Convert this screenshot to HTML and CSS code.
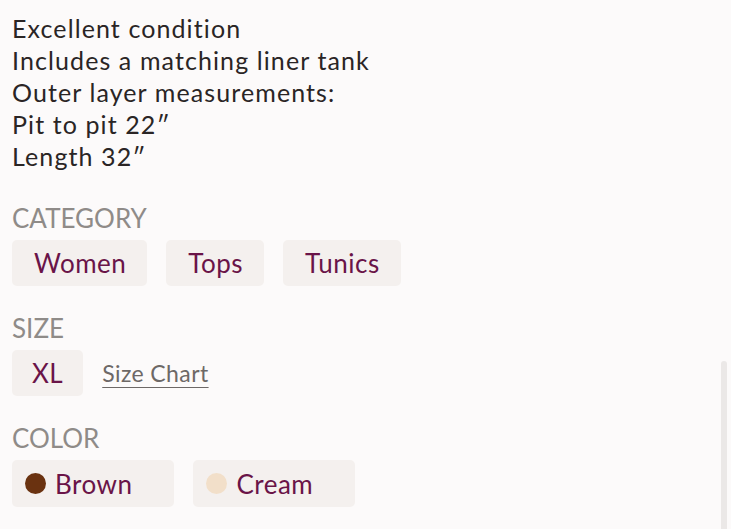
FILE: index.html
```html
<!DOCTYPE html>
<html>
<head>
<meta charset="utf-8">
<link rel="stylesheet" href="styles.css">
</head>
<body>
<div class="page">
  <div class="desc">
    <div>Excellent condition</div>
    <div>Includes a matching liner tank</div>
    <div>Outer layer measurements:</div>
    <div>Pit to pit 22″</div>
    <div>Length 32″</div>
  </div>

  <section class="group group-first">
    <div class="label">CATEGORY</div>
    <div class="chips">
      <span class="chip">Women</span>
      <span class="chip">Tops</span>
      <span class="chip">Tunics</span>
    </div>
  </section>

  <section class="group">
    <div class="label">SIZE</div>
    <div class="chips">
      <span class="chip chip-size">XL</span>
      <a class="size-chart">Size Chart</a>
    </div>
  </section>

  <section class="group">
    <div class="label">COLOR</div>
    <div class="chips">
      <span class="chip chip-color"><span class="dot dot-brown"></span>Brown</span>
      <span class="chip chip-color"><span class="dot dot-cream"></span>Cream</span>
    </div>
  </section>
</div>
<div class="scrollbar"></div>
</body>
</html>
```

FILE: styles.css
```css
html, body {
  margin: 0;
  padding: 0;
  background: #fcfafa;
  height: 100%;
  overflow: hidden;
}
body {
  font-family: "Lato", "Noto Sans", sans-serif;
  color: #2a2525;
}
.page {
  padding: 12px 12px 0 12px;
}
.desc {
  font-size: 25px;
  line-height: 32px;
  letter-spacing: 1.1px;
}
.group {
  margin-top: 29px;
}
.group-first {
  margin-top: 33px;
}
.label {
  font-size: 26px;
  line-height: 26px;
  color: #8f8b88;
  margin-bottom: 9px;
}
.chips {
  display: flex;
  align-items: center;
  gap: 19px;
}
.chip {
  display: inline-flex;
  align-items: center;
  height: 46px;
  padding: 0 21px 0 22px;
  background: #f4f0ee;
  border-radius: 5px;
  color: #6a1448;
  font-size: 26px;
  letter-spacing: 0.5px;
}
.chip-size {
  padding: 0 20px;
}
.size-chart {
  color: #6d6866;
  font-size: 23px;
  letter-spacing: 0.4px;
  text-decoration: underline;
  text-underline-offset: 5px;
  text-decoration-thickness: 1px;
}
.chip-color {
  height: 47px;
  padding: 0 42px 0 13px;
}
.dot {
  width: 21px;
  height: 21px;
  border-radius: 50%;
  margin-right: 9px;
}
.dot-brown { background: #6a3210; }
.dot-cream { background: #f2dfc9; }
.scrollbar {
  position: absolute;
  left: 721px;
  top: 361px;
  width: 6px;
  height: 180px;
  background: #ebe8e7;
  border-radius: 3px;
}
```
